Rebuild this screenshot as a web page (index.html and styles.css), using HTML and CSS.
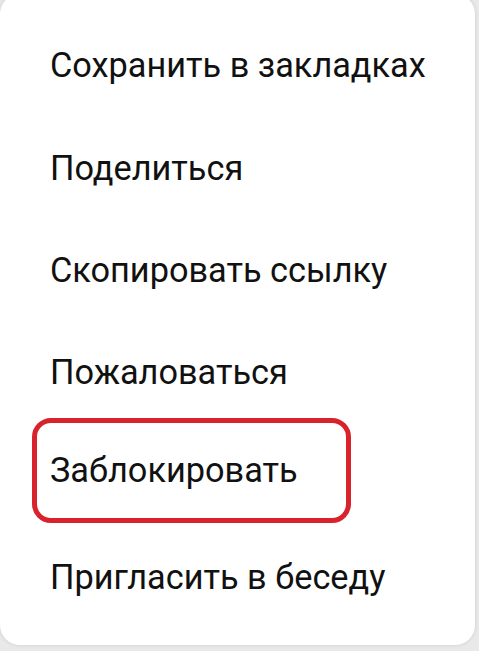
FILE: index.html
```
<!DOCTYPE html>
<html lang="ru">
<head>
<meta charset="utf-8">
<link rel="stylesheet" href="styles.css">
</head>
<body>
<div class="card">
  <ul class="menu">
    <li class="item">Сохранить в закладках</li>
    <li class="item">Поделиться</li>
    <li class="item">Скопировать ссылку</li>
    <li class="item">Пожаловаться</li>
    <li class="item item-marked">Заблокировать</li>
    <li class="item">Пригласить в беседу</li>
  </ul>
</div>
</body>
</html>
```
FILE: styles.css
```
html, body {
  margin: 0;
  padding: 0;
}
body {
  width: 479px;
  height: 651px;
  overflow: hidden;
  background: #e9e9e9;
  font-family: Roboto, "Noto Sans", sans-serif;
}
.card {
  width: 475px;
  height: 651px;
  margin-top: -6px;
  box-sizing: border-box;
  background: #ffffff;
  border-radius: 20px;
  box-shadow: 0 0 4px rgba(0, 0, 0, 0.12);
  padding-top: 20px;
}
.menu {
  list-style: none;
  margin: 0;
  padding: 0;
  display: flex;
  flex-direction: column;
}
.item {
  height: 102.4px;
  display: flex;
  align-items: center;
  padding-left: 50px;
  font-size: 34.3px;
  line-height: 40px;
  color: #111111;
  box-sizing: border-box;
}
.item-marked {
  height: 105px;
  margin: -5.6px 0 3px 32px;
  width: 319px;
  padding-left: 13px;
  border: 5px solid #d8232c;
  border-radius: 19px;
}
```
